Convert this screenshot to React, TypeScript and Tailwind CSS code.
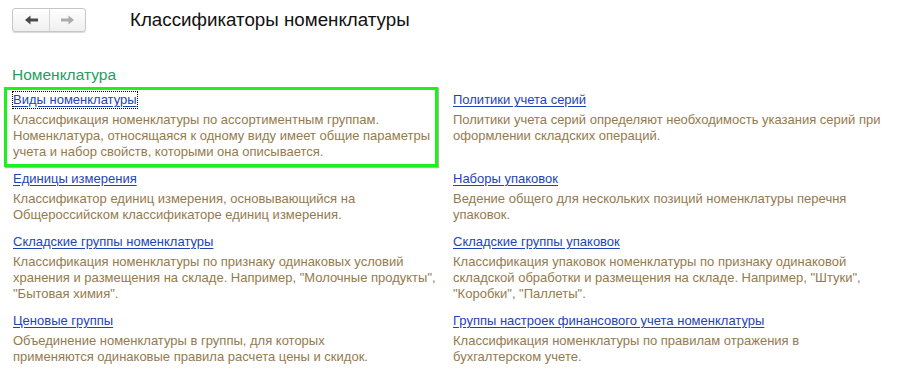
import { Fragment } from 'react'

const FONT = { fontFamily: '"Liberation Sans", Arial, sans-serif' }

interface Item {
  title: string
  lines: string[]
  focused?: boolean
}

const LEFT: Item[] = [
  {
    title: 'Виды номенклатуры',
    lines: [
      'Классификация номенклатуры по ассортиментным группам.',
      'Номенклатура, относящаяся к одному виду имеет общие параметры',
      'учета и набор свойств, которыми она описывается.',
    ],
    focused: true,
  },
  {
    title: 'Единицы измерения',
    lines: [
      'Классификатор единиц измерения, основывающийся на',
      'Общероссийском классификаторе единиц измерения.',
    ],
  },
  {
    title: 'Складские группы номенклатуры',
    lines: [
      'Классификация номенклатуры по признаку одинаковых условий',
      'хранения и размещения на складе. Например, "Молочные продукты",',
      '"Бытовая химия".',
    ],
  },
  {
    title: 'Ценовые группы',
    lines: [
      'Объединение номенклатуры в группы, для которых',
      'применяются одинаковые правила расчета цены и скидок.',
    ],
  },
]

const RIGHT: Item[] = [
  {
    title: 'Политики учета серий',
    lines: [
      'Политики учета серий определяют необходимость указания серий при',
      'оформлении складских операций.',
    ],
  },
  {
    title: 'Наборы упаковок',
    lines: ['Ведение общего для нескольких позиций номенклатуры перечня', 'упаковок.'],
  },
  {
    title: 'Складские группы упаковок',
    lines: [
      'Классификация упаковок номенклатуры по признаку одинаковой',
      'складской обработки и размещения на складе. Например, "Штуки",',
      '"Коробки", "Паллеты".',
    ],
  },
  {
    title: 'Группы настроек финансового учета номенклатуры',
    lines: ['Классификация номенклатуры по правилам отражения в', 'бухгалтерском учете.'],
  },
]

function Arrow({ dir, color }: { dir: 'left' | 'right'; color: string }) {
  return (
    <svg width="13" height="10" viewBox="0 0 13 10" className={dir === 'right' ? 'rotate-180' : ''}>
      <path d="M0 5 L5.5 0.5 L5.5 3.5 L13 3.5 L13 6.5 L5.5 6.5 L5.5 9.5 Z" fill={color} />
    </svg>
  )
}

function Cell({ item }: { item: Item }) {
  return (
    <div className="relative pb-[11px] text-[13px] leading-[16px]">
      {item.focused && (
        <div className="pointer-events-none absolute left-[-9px] top-[-5px] h-[80px] w-[434px] border-[3px] border-[#1ef01e] shadow-[1px_1px_1px_rgba(0,0,0,0.3)]" />
      )}
      <a
        href="#"
        className={`block w-fit text-[#1e44b4] underline underline-offset-[2px] ${
          item.focused ? 'outline-1 outline-dotted outline-black' : ''
        }`}
      >
        {item.title}
      </a>
      <div className="mt-[4px] text-[#957a4e]">
        {item.lines.map((l) => (
          <div key={l} className="whitespace-nowrap">
            {l}
          </div>
        ))}
      </div>
    </div>
  )
}

export default function App() {
  return (
    <div className="h-[374px] w-[904px] overflow-hidden bg-white px-[12px] pt-[8px]" style={FONT}>
      {/* Header */}
      <div className="flex h-[24px] items-center">
        <div className="flex h-[24px] w-[74px] overflow-hidden rounded-[3px] border border-[#c6c6c6] bg-gradient-to-b from-white to-[#efefef] shadow-[0_1px_1px_rgba(0,0,0,0.15)]">
          <button className="flex w-[37px] items-center justify-center border-r border-[#d4d4d4]">
            <Arrow dir="left" color="#4a4a4a" />
          </button>
          <button className="flex flex-1 items-center justify-center">
            <Arrow dir="right" color="#ababab" />
          </button>
        </div>
        <h1 className="ml-[44px] text-[18.75px] leading-[22px] text-[#111]">Классификаторы номенклатуры</h1>
      </div>

      {/* Group */}
      <div className="mt-[34px] text-[15.5px] leading-[18px] text-[#2a9c62]">Номенклатура</div>

      <div className="mt-[8px] grid grid-cols-[440px_1fr] pl-[1px]">
        {LEFT.map((it, i) => (
          <Fragment key={it.title}>
            <Cell item={it} />
            <Cell item={RIGHT[i]} />
          </Fragment>
        ))}
      </div>
    </div>
  )
}
